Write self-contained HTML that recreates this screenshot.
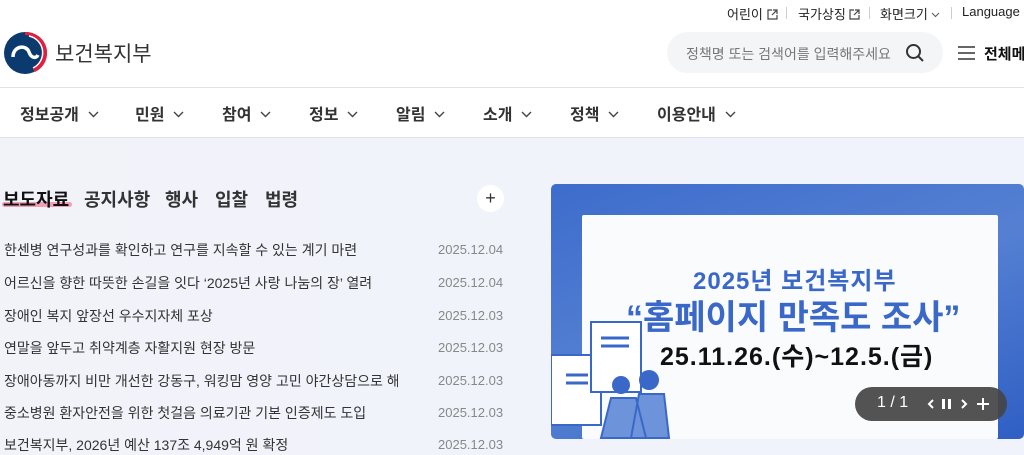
<!DOCTYPE html>
<html><head><meta charset="utf-8"><style>
*{margin:0;padding:0;box-sizing:border-box}
body{width:1024px;height:455px;overflow:hidden;font-family:"Liberation Sans","Noto Sans CJK KR",sans-serif;background:#fff;color:#222;position:relative}
.a{position:absolute;white-space:nowrap}
.util{top:4px;font-size:13px;color:#222}
.sep{width:1px;height:12px;background:#ccc;top:7px}
.nav{top:101px;font-size:16px;font-weight:bold;color:#333}
.chev{display:inline-block;margin-left:9px;vertical-align:2px}
.content{top:137px;left:0;width:1024px;height:318px;background:linear-gradient(90deg,#f2f3f9,#f0f3fc);border-top:1px solid #e2e4ea}
.tab{top:186px;font-size:18px;font-weight:bold;color:#333}
.li{font-size:14px;color:#333;left:4px;width:394px;overflow:hidden}
.dt{font-size:13px;color:#888;left:438px}
</style></head><body>
<div class="a util" style="left:727px">어린이 <svg width="11" height="11" viewBox="0 0 11 11" style="vertical-align:-1px"><path d="M5 1H1v9h9V6M6 1h4v4M10 1L5 6" fill="none" stroke="#444" stroke-width="1.2"/></svg></div>
<div class="a sep" style="left:786px"></div>
<div class="a util" style="left:798px">국가상징 <svg width="11" height="11" viewBox="0 0 11 11" style="vertical-align:-1px"><path d="M5 1H1v9h9V6M6 1h4v4M10 1L5 6" fill="none" stroke="#444" stroke-width="1.2"/></svg></div>
<div class="a sep" style="left:869px"></div>
<div class="a util" style="left:880px">화면크기 <svg width="9" height="6" viewBox="0 0 9 6" style="vertical-align:1px"><path d="M1 1l3.5 3.5L8 1" fill="none" stroke="#666" stroke-width="1.2"/></svg></div>
<div class="a sep" style="left:951px"></div>
<div class="a util" style="left:962px">Language</div>

<svg class="a" style="left:3px;top:31px" width="44" height="44" viewBox="0 0 44 44">
<circle cx="22" cy="22" r="21" fill="#0b3a6e"/>
<path d="M22 1 A21 21 0 0 1 32 41 L30 38 A18 18 0 0 0 22 4Z" fill="#e0203f"/>
<path d="M26 5 A17 17 0 0 1 30 37" fill="none" stroke="#fff" stroke-width="1.5"/>
<path d="M10 26 C10 15 23 13 26 21 C28 27 33 28 35 24" fill="none" stroke="#fff" stroke-width="3.5"/>
</svg>
<div class="a" style="left:55px;top:38px;font-size:21px;color:#333">보건복지부</div>

<div class="a" style="left:667px;top:32px;width:276px;height:41px;border-radius:21px;background:#f4f5f7"></div>
<div class="a" style="left:686px;top:44px;font-size:14px;color:#777">정책명 또는 검색어를 입력해주세요</div>
<svg class="a" style="left:905px;top:43px" width="20" height="20" viewBox="0 0 20 20"><circle cx="8.5" cy="8.5" r="6.5" fill="none" stroke="#333" stroke-width="2"/><path d="M13.5 13.5L18 18" stroke="#333" stroke-width="2"/></svg>
<svg class="a" style="left:958px;top:45px" width="18" height="16"><path d="M0 2h17M0 8h17M0 14h17" stroke="#333" stroke-width="1.6"/></svg>
<div class="a" style="left:984px;top:43px;font-size:15px;font-weight:bold;color:#111">전체메뉴</div>

<div class="a" style="left:0;top:87px;width:1024px;height:1px;background:#e2e2e2"></div>
<div class="a nav" style="left:20px">정보공개<svg class="chev" width="11" height="7" viewBox="0 0 11 7"><path d="M1 1l4.5 4.5L10 1" fill="none" stroke="#444" stroke-width="1.4"/></svg></div>
<div class="a nav" style="left:135px">민원<svg class="chev" width="11" height="7" viewBox="0 0 11 7"><path d="M1 1l4.5 4.5L10 1" fill="none" stroke="#444" stroke-width="1.4"/></svg></div>
<div class="a nav" style="left:222px">참여<svg class="chev" width="11" height="7" viewBox="0 0 11 7"><path d="M1 1l4.5 4.5L10 1" fill="none" stroke="#444" stroke-width="1.4"/></svg></div>
<div class="a nav" style="left:309px">정보<svg class="chev" width="11" height="7" viewBox="0 0 11 7"><path d="M1 1l4.5 4.5L10 1" fill="none" stroke="#444" stroke-width="1.4"/></svg></div>
<div class="a nav" style="left:396px">알림<svg class="chev" width="11" height="7" viewBox="0 0 11 7"><path d="M1 1l4.5 4.5L10 1" fill="none" stroke="#444" stroke-width="1.4"/></svg></div>
<div class="a nav" style="left:483px">소개<svg class="chev" width="11" height="7" viewBox="0 0 11 7"><path d="M1 1l4.5 4.5L10 1" fill="none" stroke="#444" stroke-width="1.4"/></svg></div>
<div class="a nav" style="left:570px">정책<svg class="chev" width="11" height="7" viewBox="0 0 11 7"><path d="M1 1l4.5 4.5L10 1" fill="none" stroke="#444" stroke-width="1.4"/></svg></div>
<div class="a nav" style="left:657px">이용안내<svg class="chev" width="11" height="7" viewBox="0 0 11 7"><path d="M1 1l4.5 4.5L10 1" fill="none" stroke="#444" stroke-width="1.4"/></svg></div>

<div class="a content"></div>
<div class="a" style="left:2px;top:202px;width:70px;height:5px;background:#f3a0b5;border-radius:3px"></div>
<div class="a tab" style="left:3px;color:#111">보도자료</div>
<div class="a tab" style="left:84px">공지사항</div>
<div class="a tab" style="left:165px">행사</div>
<div class="a tab" style="left:215px">입찰</div>
<div class="a tab" style="left:265px">법령</div>
<div class="a" style="left:477px;top:185px;width:27px;height:27px;border-radius:50%;background:#fff;text-align:center;line-height:26px;font-size:18px;color:#333">+</div>

<div class="a li" style="top:240px">한센병 연구성과를 확인하고 연구를 지속할 수 있는 계기 마련</div><div class="a dt" style="top:242px">2025.12.04</div>
<div class="a li" style="top:273px">어르신을 향한 따뜻한 손길을 잇다 ‘2025년 사랑 나눔의 장’ 열려</div><div class="a dt" style="top:275px">2025.12.04</div>
<div class="a li" style="top:306px">장애인 복지 앞장선 우수지자체 포상</div><div class="a dt" style="top:308px">2025.12.03</div>
<div class="a li" style="top:338px">연말을 앞두고 취약계층 자활지원 현장 방문</div><div class="a dt" style="top:340px">2025.12.03</div>
<div class="a li" style="top:371px">장애아동까지 비만 개선한 강동구, 워킹맘 영양 고민 야간상담으로 해결</div><div class="a dt" style="top:373px">2025.12.03</div>
<div class="a li" style="top:403px">중소병원 환자안전을 위한 첫걸음 의료기관 기본 인증제도 도입</div><div class="a dt" style="top:405px">2025.12.03</div>
<div class="a li" style="top:435px">보건복지부, 2026년 예산 137조 4,949억 원 확정</div><div class="a dt" style="top:437px">2025.12.03</div>

<div class="a" style="left:551px;top:184px;width:473px;height:255px;border-radius:5px;background:linear-gradient(160deg,#3d6ccc,#5580d2 50%,#2f5fc4)"></div>
<div class="a" style="left:582px;top:215px;width:416px;height:224px;background:#fafbfc;border-radius:2px"></div>
<div class="a" style="left:693px;top:261px;font-size:24px;font-weight:bold;color:#3a68c8;letter-spacing:1px">2025년 보건복지부</div>
<div class="a" style="left:626px;top:290px;font-size:34px;font-weight:bold;color:#3a68c8;letter-spacing:0px">“홈페이지 만족도 조사”</div>
<div class="a" style="left:660px;top:337px;font-size:25px;font-weight:bold;color:#111;letter-spacing:1px">25.11.26.(수)~12.5.(금)</div>
<svg class="a" style="left:551px;top:320px" width="130" height="120" viewBox="0 0 130 120">
<rect x="0" y="35" width="50" height="70" fill="#fff" stroke="#3a68c8" stroke-width="2"/>
<path d="M40 2h50v70H40z" fill="#fff" stroke="#3a68c8" stroke-width="2"/>
<path d="M50 18h28M50 26h28M15 55h22M15 63h22" stroke="#3a68c8" stroke-width="3"/>
<circle cx="70" cy="65" r="9" fill="#3a68c8"/><circle cx="98" cy="60" r="10" fill="#3a68c8"/>
<path d="M60 78h25l10 40H50zM88 74h25l5 44H80z" fill="#6d93da" stroke="#3a68c8" stroke-width="2"/>
</svg>
<div class="a" style="left:855px;top:387px;width:152px;height:34px;border-radius:17px;background:#444;opacity:.92"></div>
<div class="a" style="left:877px;top:394px;font-size:16px;color:#fff">1 / 1</div>
<svg class="a" style="left:925px;top:396px" width="70" height="16" viewBox="0 0 70 16"><path d="M8 4l-4 4 4 4" fill="none" stroke="#fff" stroke-width="2"/><rect x="17" y="3" width="3" height="10" fill="#fff"/><rect x="23" y="3" width="3" height="10" fill="#fff"/><path d="M37 4l4 4-4 4" fill="none" stroke="#fff" stroke-width="2"/><path d="M52 8h12M58 2v12" stroke="#fff" stroke-width="2"/></svg>
</body></html>
